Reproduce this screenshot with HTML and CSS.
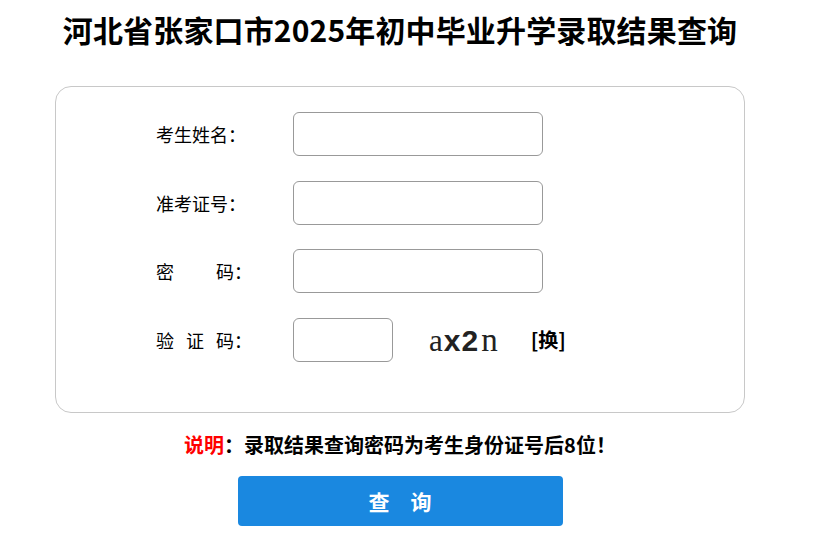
FILE: index.html
```html
<!DOCTYPE html>
<html lang="zh-CN">
<head>
  <meta charset="UTF-8">
  <meta name="viewport" content="width=device-width, initial-scale=1.0">
  <title>河北省张家口市2025年初中毕业升学录取结果查询</title>
  <link rel="stylesheet" href="styles.css">
</head>
<body>
  <div class="page">
    <h1>河北省张家口市2025年初中毕业升学录取结果查询</h1>

    <!-- 查询表单 -->
    <form class="card" onsubmit="return false;">
      <div class="row">
        <label class="label" for="xm">考生姓名：</label>
        <input type="text" id="xm" class="field">
      </div>
      <div class="row">
        <label class="label" for="zkzh">准考证号：</label>
        <input type="text" id="zkzh" class="field">
      </div>
      <div class="row">
        <label class="label" for="mm">密<span class="gap-wide"></span>码：</label>
        <input type="password" id="mm" class="field">
      </div>
      <div class="row">
        <label class="label" for="yzm">验<span class="gap"></span>证<span class="gap"></span>码：</label>
        <input type="text" id="yzm" class="field field-short">
        <span class="captcha"><span class="c-serif">a</span><span class="c-sans">x</span><span class="c-sans">2</span><span class="c-serif c-n">n</span></span>
        <a class="refresh">[换]</a>
      </div>
    </form>

    <p class="note"><span class="note-key">说明</span>：录取结果查询密码为考生身份证号后8位！</p>

    <button class="submit" type="button">查&emsp;询</button>
  </div>
</body>
</html>
```

FILE: styles.css
```css
body {
  margin: 0;
  background: #fff;
  color: #000;
  font-family: "Noto Sans CJK SC", "Noto Sans", sans-serif;
}
.page {
  width: 800px;
  display: flex;
  flex-direction: column;
  align-items: center;
}
h1 {
  margin: 8px 0 0;
  font-size: 30px;
  line-height: 42px;
  font-weight: bold;
  letter-spacing: 0.15px;
}
.card {
  box-sizing: border-box;
  width: 690px;
  height: 327px;
  margin-top: 36px;
  padding: 25px 0 0 100px;
  border: 1px solid #c8c8c8;
  border-radius: 16px;
}
.row {
  display: flex;
  align-items: center;
  height: 44px;
  margin-bottom: 24.5px;
}
.label {
  width: 137px;
  font-size: 18px;
  line-height: 24px;
}
.gap {
  display: inline-block;
  width: 12px;
}
.gap-wide {
  display: inline-block;
  width: 42px;
}
.field {
  box-sizing: border-box;
  width: 250px;
  height: 44px;
  margin: 0;
  padding: 0 8px;
  border: 1px solid #999;
  border-radius: 6px;
  font-size: 16px;
}
.field-short {
  width: 100px;
}
.captcha {
  display: inline-flex;
  align-items: baseline;
  margin-left: 36px;
  height: 36px;
  line-height: 36px;
  color: #222;
}
.c-serif {
  font-family: "Liberation Serif", serif;
  font-size: 31px;
}
.c-sans {
  font-family: "Liberation Sans", sans-serif;
  font-weight: bold;
  font-size: 30px;
  margin-left: 1px;
}
.c-n {
  margin-left: 3px;
  font-size: 33px;
}
.refresh {
  margin-left: 33px;
  font-size: 20px;
  font-weight: bold;
  cursor: pointer;
}
.note {
  margin: 18px 0 0;
  font-size: 20px;
  line-height: 28px;
  font-weight: bold;
}
.note-key {
  color: #f00;
}
.submit {
  width: 325px;
  height: 50px;
  margin-top: 17px;
  border: none;
  border-radius: 4px;
  background: #1a88e0;
  color: #fff;
  font-family: inherit;
  font-size: 21px;
  font-weight: bold;
  cursor: pointer;
}
```
